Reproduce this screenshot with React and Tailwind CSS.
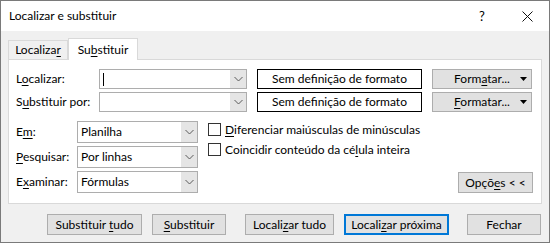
import React from 'react';

function U({ children }) {
  return <span className="underline underline-offset-[2px] decoration-1">{children}</span>;
}

function Chevron() {
  return (
    <svg width="9" height="6" viewBox="0 0 9 6" className="block">
      <path d="M0.5 1 L4.5 5 L8.5 1" fill="none" stroke="#5a5a5a" strokeWidth="1" />
    </svg>
  );
}

function Combo({ className, value, cursor }) {
  return (
    <div className={`flex border border-[#adadad] bg-white ${className}`}>
      <div className="flex-1 flex items-center pl-[3px]">
        {cursor && <div className="w-px h-[13px] bg-black" />}
        {value && <span>{value}</span>}
      </div>
      <div className="w-[16px] bg-[#e5e5e5] flex items-center justify-center">
        <Chevron />
      </div>
    </div>
  );
}

function FormatButton({ children }) {
  return (
    <div className="w-[100px] h-[20px] flex items-center border border-[#adadad] bg-[#e1e1e1]">
      <div className="w-[16px]" />
      <div className="flex-1 text-center">
        <span>{children}</span>
      </div>
      <div className="w-[16px] flex items-center justify-center">
        <svg width="7" height="4" viewBox="0 0 7 4" className="block">
          <path d="M0 0 L7 0 L3.5 4 Z" fill="#000" />
        </svg>
      </div>
    </div>
  );
}

function Btn({ className, focused, children }) {
  const border = focused ? 'border-2 border-[#0078d7]' : 'border border-[#adadad]';
  return (
    <div className={`h-[21px] flex items-center justify-center bg-[#e1e1e1] ${border} ${className}`}>
      <span>{children}</span>
    </div>
  );
}

function Check({ children }) {
  return (
    <div className="flex items-center h-[13px]">
      <div className="w-[13px] h-[13px] border border-[#333] bg-white" />
      <span className="ml-[4px]">{children}</span>
    </div>
  );
}

export default function App() {
  return (
    <div
      className="w-[550px] h-[243px] border border-[#7a7a7a] bg-[#f0f0f0] flex flex-col text-[12px] text-black leading-none"
      style={{ fontFamily: '"Segoe UI", Lato, "Noto Sans", sans-serif' }}
    >
      {/* title bar */}
      <div className="h-[30px] bg-white flex items-center">
        <span className="ml-[8px] flex-1">Localizar e substituir</span>
        <div className="w-[46px] flex justify-center text-[13px]">?</div>
        <div className="w-[44px] flex justify-center">
          <svg width="11" height="11" viewBox="0 0 11 11">
            <path d="M0.5 0.5 L10.5 10.5 M10.5 0.5 L0.5 10.5" stroke="#111" strokeWidth="1" />
          </svg>
        </div>
      </div>

      {/* tabs */}
      <div className="flex items-end ml-[7px] mt-[7px] h-[21px]">
        <div className="w-[60px] h-[19px] border border-b-0 border-[#d9d9d9] bg-[#f0f0f0] flex items-center justify-center">
          <span>Localiza<U>r</U></span>
        </div>
        <div className="w-[70px] h-[22px] border border-b-0 border-[#d9d9d9] bg-white flex items-center justify-center -mb-px relative z-10">
          <span>Su<U>b</U>stituir</span>
        </div>
      </div>

      {/* panel */}
      <div className="ml-[7px] w-[534px] h-[145px] border border-[#d9d9d9] bg-white pl-[7px] pt-[9px]">
        <div className="flex flex-col gap-[3px]">
          <div className="flex items-center h-[20px]">
            <span className="w-[83px]">L<U>o</U>calizar:</span>
            <Combo className="w-[148px] h-[20px]" cursor />
            <div className="ml-[10px] w-[165px] h-[20px] border border-black flex items-center justify-center">
              Sem definição de formato
            </div>
            <div className="ml-[10px]">
              <FormatButton>Form<U>a</U>tar...</FormatButton>
            </div>
          </div>
          <div className="flex items-center h-[20px]">
            <span className="w-[83px]">S<U>u</U>bstituir por:</span>
            <Combo className="w-[148px] h-[20px]" />
            <div className="ml-[10px] w-[165px] h-[20px] border border-black flex items-center justify-center">
              Sem definição de formato
            </div>
            <div className="ml-[10px]">
              <FormatButton><U>F</U>ormatar...</FormatButton>
            </div>
          </div>
        </div>

        <div className="flex mt-[9px]">
          <div className="flex flex-col gap-[3px]">
            <div className="flex items-center h-[22px]">
              <span className="w-[61px]">E<U>m</U>:</span>
              <Combo className="w-[121px] h-[22px]" value="Planilha" />
            </div>
            <div className="flex items-center h-[22px]">
              <span className="w-[61px]"><U>P</U>esquisar:</span>
              <Combo className="w-[121px] h-[22px]" value="Por linhas" />
            </div>
            <div className="flex items-center h-[22px]">
              <span className="w-[61px]">E<U>x</U>aminar:</span>
              <Combo className="w-[121px] h-[22px]" value="Fórmulas" />
            </div>
          </div>
          <div className="ml-[10px] pt-[2px] flex flex-col gap-[7px]">
            <Check><U>D</U>iferenciar maiúsculas de minúsculas</Check>
            <Check>Coincidir conteúdo da cé<U>l</U>ula inteira</Check>
          </div>
          <div className="flex-1 flex justify-end items-end pr-[8px]">
            <Btn className="w-[75px]">Opçõ<U>e</U>s &lt; &lt;</Btn>
          </div>
        </div>
      </div>

      {/* bottom buttons */}
      <div className="flex items-center mt-[10px] ml-[46px]">
        <Btn className="w-[95px]">Substituir <U>t</U>udo</Btn>
        <Btn className="w-[74px] ml-[10px]"><U>S</U>ubstituir</Btn>
        <Btn className="w-[89px] ml-[19px]">Locali<U>z</U>ar tudo</Btn>
        <Btn className="w-[105px] ml-[10px]" focused>Locali<U>z</U>ar próxima</Btn>
        <Btn className="w-[74px] ml-[18px]">Fechar</Btn>
      </div>
    </div>
  );
}
